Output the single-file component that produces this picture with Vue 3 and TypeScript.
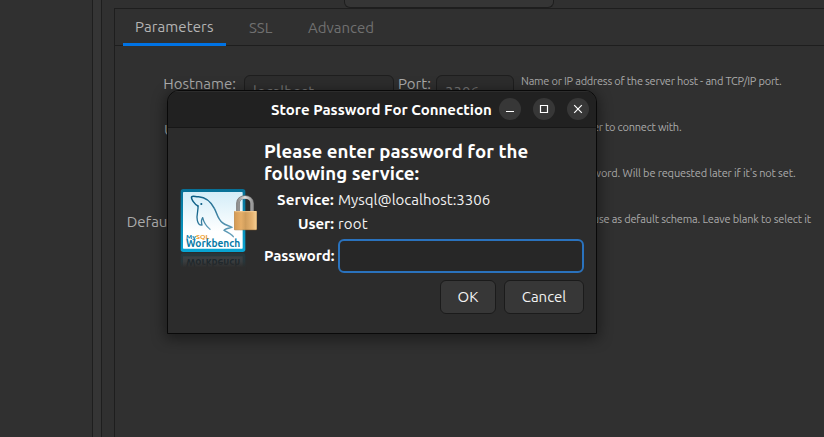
<script setup lang="ts">
import { ref } from 'vue'

interface Field {
  key: string
  label: string
  value: string
  hint: string
}

const tabs = ['Parameters', 'SSL', 'Advanced']
const activeTab = ref('Parameters')
const password = ref('')

const fields: Field[] = [
  { key: 'host', label: 'Hostname:', value: 'localhost', hint: 'Name or IP address of the server host - and TCP/IP port.' },
  { key: 'user', label: 'Username:', value: '', hint: 'Name of the user to connect with.' },
  { key: 'pass', label: 'Password:', value: '', hint: "The user's password. Will be requested later if it's not set." },
  { key: 'schema', label: 'Default Schema:', value: '', hint: 'The schema to use as default schema. Leave blank to select it' },
]
</script>

<template>
  <div class="window">
    <aside class="sidebar"></aside>
    <div class="splitter"></div>
    <main class="content">
      <div class="method"><div class="combo"></div></div>
      <section class="panel">
        <nav class="tabs">
          <button
            v-for="tab in tabs"
            :key="tab"
            class="tab"
            :class="['tab-' + tab.toLowerCase(), { active: tab === activeTab }]"
            @click="activeTab = tab"
          >{{ tab }}</button>
        </nav>
        <div class="form">
          <div v-for="f in fields" :key="f.key" class="row">
            <span class="label" :class="'label-' + f.key">{{ f.label }}</span>
            <div class="inputs">
              <div class="entry">{{ f.value }}</div>
              <template v-if="f.key === 'host'">
                <span class="port">Port:</span>
                <div class="entry small">3306</div>
              </template>
            </div>
            <span class="hint" :class="'hint-' + f.key">{{ f.hint }}</span>
          </div>
        </div>
      </section>
    </main>

    <div class="dialog" role="dialog">
      <header class="titlebar">
        <span class="title">Store Password For Connection</span>
        <div class="controls">
          <button class="ctl"><svg viewBox="0 0 22 22"><path d="M7 13.5h8" /></svg></button>
          <button class="ctl"><svg viewBox="0 0 22 22"><path d="M7.5 7.5h7v7h-7z" /></svg></button>
          <button class="ctl"><svg viewBox="0 0 22 22"><path d="M7.2 7.2l7.6 7.6M14.8 7.2l-7.6 7.6" /></svg></button>
        </div>
      </header>
      <div class="body">
        <svg class="logo" viewBox="30 24 240 252">
          <defs>
            <linearGradient id="frame" x1="0" y1="0" x2="0" y2="1">
              <stop offset="0" stop-color="#087096" /><stop offset="1" stop-color="#09a5d3" />
            </linearGradient>
            <linearGradient id="sky" x1="0" y1="0" x2="0" y2="1">
              <stop offset="0" stop-color="#d3edf8" /><stop offset=".7" stop-color="#fff" />
            </linearGradient>
            <linearGradient id="fin" x1="0" y1="0" x2="1" y2="1">
              <stop offset="0" stop-color="#075b83" /><stop offset="1" stop-color="#6ba3bd" />
            </linearGradient>
            <linearGradient id="brass">
              <stop offset="0" stop-color="#d39a55" /><stop offset=".3" stop-color="#e5ae68" />
              <stop offset=".5" stop-color="#cf9d5c" /><stop offset=".8" stop-color="#e7b472" /><stop offset="1" stop-color="#f6cf93" />
            </linearGradient>
            <linearGradient id="steel">
              <stop offset="0" stop-color="#8e8e8e" /><stop offset=".5" stop-color="#e0e0e0" /><stop offset="1" stop-color="#989898" />
            </linearGradient>
            <linearGradient id="fade" x1="0" y1="0" x2="0" y2="1">
              <stop offset="0" stop-color="#2c2c2c" stop-opacity=".5" /><stop offset=".6" stop-color="#2c2c2c" stop-opacity=".6" /><stop offset="1" stop-color="#2c2c2c" />
            </linearGradient>
          </defs>
          <rect x="32" y="27" width="194" height="189" rx="8" fill="url(#frame)" />
          <rect x="39" y="36" width="179" height="170" rx="2" fill="url(#sky)" />
          <g fill="none" stroke="url(#fin)" stroke-linejoin="round" stroke-linecap="round">
            <path stroke-width="4.5" d="M84 78C73 73 62 56 65 50C69 46 78 51 86 50C104 51 122 64 133 85C141 99 142 116 157 128C166 136 178 137 186 142C175 145 165 146 162 151C172 156 184 162 190 170" />
            <path stroke-width="4" d="M84 78C86 90 78 105 82 121C84 130 89 136 96 135C94 128 93 120 98 113C101 126 109 139 120 148" />
          </g>
          <circle cx="94" cy="72" r="3.2" fill="#075b83" />
          <text class="brand my" x="48" y="177" font-size="18" textLength="70" lengthAdjust="spacingAndGlyphs"><tspan fill="#087ba7">My</tspan><tspan fill="#ed9b2a">SQL</tspan></text>
          <text class="brand name" x="48" y="200" font-size="30" textLength="163" lengthAdjust="spacingAndGlyphs" fill="#087ba7">Workbench</text>
          <g transform="translate(0 436) scale(1 -1)">
            <rect x="32" y="160" width="194" height="56" rx="8" fill="#087fa2" opacity=".3" />
            <rect x="39" y="160" width="179" height="47" fill="#50585d" />
            <text class="brand name" x="48" y="200" font-size="30" textLength="163" lengthAdjust="spacingAndGlyphs" fill="#08202c">Workbench</text>
          </g>
          <rect x="30" y="217" width="199" height="45" fill="url(#fade)" />
          <rect x="30" y="261" width="199" height="16" fill="#2c2c2c" />
          <path d="M204 95V70C204 45 246 45 246 70V95" fill="none" stroke="#777" stroke-width="11" />
          <path d="M204 95V70C204 46 246 46 246 70V95" fill="none" stroke="url(#steel)" stroke-width="8" />
          <rect x="192" y="93" width="69" height="58" rx="3" fill="#94662f" opacity=".7" />
          <rect x="193" y="93" width="67" height="56" rx="2" fill="url(#brass)" />
          <path d="M194 95h65" stroke="#f9d7a0" stroke-width="2" />
        </svg>
        <div class="fields">
          <h1>Please enter password for the<br />following service:</h1>
          <div class="pair"><b class="wide">Service:</b><span>Mysql@localhost:3306</span></div>
          <div class="pair"><b>User:</b><span class="wide">root</span></div>
          <div class="pair pw"><b>Password:</b><input v-model="password" type="password" /></div>
          <div class="actions">
            <button class="btn ok">OK</button>
            <button class="btn cancel">Cancel</button>
          </div>
        </div>
      </div>
    </div>
  </div>
</template>

<style>
body { background: #303030; overflow: hidden; }
</style>

<style scoped>
* { box-sizing: border-box; }
button { font: inherit; padding: 0; border: 0; background: none; color: inherit; }
.window {
  position: relative; display: flex; width: 824px; height: 437px; overflow: hidden;
  background: #303030; color: #acacac;
  font: 15px/20px Ubuntu, "Noto Sans", "Open Sans", sans-serif; white-space: nowrap;
}
.sidebar { width: 92px; flex: none; }
.splitter { width: 10px; flex: none; background: #353535; border: solid #1e1e1e; border-width: 0 1px; }
.content { flex: 1; padding-left: 12px; min-width: 0; }
.method { height: 8px; padding-left: 230px; }
.combo { width: 210px; height: 8px; background: #353535; border: 1px solid #1e1e1e; border-top: 0; border-radius: 0 0 6px 6px; }
.panel { height: 429px; border: solid #1e1e1e; border-width: 1px 0 0 1px; }
.tabs { display: flex; height: 37px; padding-left: 8px; border-bottom: 1px solid #1e1e1e; }
.tab { height: 37px; padding: 0 12px; color: #707070; text-align: left; }
.tab.active { color: #b4b4b4; border-bottom: 3px solid #0073e5; padding-top: 2px; letter-spacing: 0.1px; }
.tab-parameters { width: 103px; }
.tab-ssl { width: 59px; padding-left: 23px; }
.tab-advanced { padding-left: 23px; }
.form { padding-top: 15px; }
.row { display: grid; grid-template-columns: 121px 278px 1fr; height: 46px; align-items: center; }
.label { text-align: right; }
.label-schema { letter-spacing: -0.06px; }
.inputs { display: flex; align-items: flex-start; height: 34px; padding-left: 8px; }
.entry { flex: none; width: 150px; height: 34px; margin-top: 8px; padding: 6px 8px; border: 1px solid #1e1e1e; border-radius: 6px; color: #777; background: #2d2d2d; }
.small { width: 78px; }
.port { flex: none; width: 42px; padding: 7px 0 0 4px; }
.hint { font-size: 11px; padding-left: 7px; margin-bottom: 6px; color: #aaa; letter-spacing: -0.22px; }
.hint-pass { letter-spacing: -0.15px; }
.hint-schema { letter-spacing: -0.17px; }

.dialog {
  position: absolute; left: 167px; top: 90px; width: 430px; height: 244px;
  border: 1px solid #090909; border-radius: 12px 12px 0 0; background: #2c2c2c; color: #f2f2f2;
  box-shadow: 0 3px 14px 2px rgba(0, 0, 0, .42); overflow: hidden;
}
.titlebar { height: 37px; display: flex; align-items: center; padding-left: 103px; background: #212121; border-bottom: 1px solid #171717; box-shadow: inset 0 1px #2c2c2c; }
.title { width: 228px; padding-top: 1px; font-weight: 700; color: #fff; letter-spacing: 0.02px; }
.controls { display: flex; gap: 12px; }
.ctl { width: 22px; height: 22px; border-radius: 50%; background: #373737; }
.ctl svg { display: block; width: 22px; height: 22px; fill: none; stroke: #fff; stroke-width: 1.2; }
.body { display: flex; padding: 12px 12px 0; }
.logo { width: 80px; height: 84px; margin-top: 48px; flex: none; }
.brand { font-family: Ubuntu, "Noto Sans", sans-serif; }
.name, .my { font-weight: 700; }
.fields { margin-left: 4px; width: 320px; }
h1 { margin: 0; padding: 1px 0 3px; font-size: 18.67px; line-height: 22px; font-weight: 700; color: #fff; letter-spacing: 0.05px; }
.pair { display: grid; grid-template-columns: 70px 246px; column-gap: 4px; height: 24px; align-items: center; }
.pair b { text-align: right; color: #fff; letter-spacing: -0.06px; }
.pair b.wide, .wide { letter-spacing: 0.2px; }
.pw { height: 34px; margin-top: 3px; }
.pw input { width: 246px; height: 34px; border: 2px solid #2a72bd; border-radius: 6px; background: #272727; outline: none; color: #fff; }
.actions { display: flex; justify-content: flex-end; gap: 8px; margin-top: 7px; }
.btn { height: 34px; border: 1px solid #1b1b1b; border-radius: 6px; background: #373737; }
.ok { width: 56px; }
.cancel { width: 80px; }
</style>
